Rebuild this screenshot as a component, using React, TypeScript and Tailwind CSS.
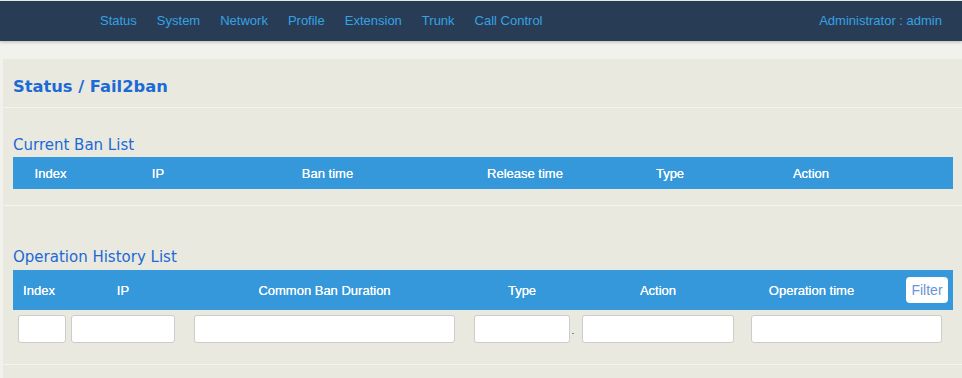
const navItems = ["Status", "System", "Network", "Profile", "Extension", "Trunk", "Call Control"];

const banCols = [
  { label: "Index", w: "w-[75px]" },
  { label: "IP", w: "w-[140px]" },
  { label: "Ban time", w: "w-[199px]" },
  { label: "Release time", w: "w-[196px]" },
  { label: "Type", w: "w-[94px]" },
  { label: "Action", w: "w-[188px]" },
];

const historyCols = [
  { label: "Index", w: "w-[52px]" },
  { label: "IP", w: "w-[116px]" },
  { label: "Common Ban Duration", w: "w-[287px]" },
  { label: "Type", w: "w-[108px]" },
  { label: "Action", w: "w-[164px]" },
  { label: "Operation time", w: "w-[143px]" },
];

function Field({ className }: { className: string }) {
  return <input className={`h-[28px] bg-white border border-[#cccccc] rounded-[3px] outline-none ${className}`} />;
}

export default function App() {
  return (
    <div className="min-h-[378px] bg-[#f2f2ec] pt-px font-['Liberation_Sans',Arial,sans-serif]">
      <header className="h-[40px] bg-[#283d55] flex items-center justify-between pl-[90px] pr-[20px] shadow-[0_1px_3px_rgba(0,0,0,0.25)] text-[13px] text-[#35a2e4]">
        <nav className="flex">
          {navItems.map((item) => (
            <a key={item} className="px-[10px] cursor-pointer">
              {item}
            </a>
          ))}
        </nav>
        <span>Administrator : admin</span>
      </header>

      <main className="mt-[18px] ml-[3px] bg-[#e9e9df] pl-[10px] pr-[9px] pb-[13px] font-['DejaVu_Sans',Verdana,sans-serif] text-[#1c6ad6]">
        <div className="h-[48px] pt-[16px]">
          <h1 className="text-[16.3px] leading-[24px] font-bold">Status / Fail2ban</h1>
        </div>
        <div className="-ml-[10px] -mr-[9px] h-px bg-[#f4f4ef]" />

        <h2 className="mt-[27px] mb-[2px] text-[15px] leading-[20px]">Current Ban List</h2>
        <div className="h-[32px] pt-[2px] bg-[#3598db] flex items-center text-white text-[13px] font-['Liberation_Sans',Arial,sans-serif] [text-shadow:0_0_0.4px_#fff]">
          {banCols.map((c) => (
            <div key={c.label} className={`${c.w} text-center`}>
              {c.label}
            </div>
          ))}
        </div>
        <div className="mt-[16px] -ml-[10px] -mr-[9px] h-px bg-[#f4f4ef]" />

        <h2 className="mt-[41px] mb-[3px] text-[15px] leading-[20px]">Operation History List</h2>
        <div className="h-[40px] pt-[2px] bg-[#3598db] flex items-center text-white text-[13px] font-['Liberation_Sans',Arial,sans-serif]">
          {historyCols.map((c) => (
            <div key={c.label} className={`${c.w} text-center [text-shadow:0_0_0.4px_#fff]`}>
              {c.label}
            </div>
          ))}
          <button className="ml-[23px] -mt-[2px] w-[42px] h-[26px] bg-white rounded-[4px] text-[14px] text-[#6d93d8]">Filter</button>
        </div>
        <div className="mt-[5px] flex items-center pl-[5px]">
          <Field className="w-[48px]" />
          <Field className="ml-[5px] w-[104px]" />
          <Field className="ml-[19px] w-[261px]" />
          <Field className="ml-[19px] w-[96px]" />
          <span className="ml-[2px] mt-[8px] w-[2px] h-px bg-[#6a8fb0]" />
          <Field className="ml-[8px] w-[152px]" />
          <Field className="ml-[17px] w-[191px]" />
        </div>
        <div className="mt-[21px] -ml-[10px] -mr-[9px] h-px bg-[#f4f4ef]" />
      </main>
    </div>
  );
}
